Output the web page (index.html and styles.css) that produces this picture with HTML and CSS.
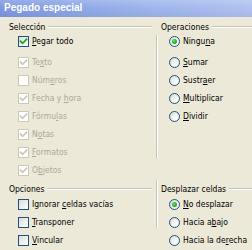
FILE: index.html
```html
<!DOCTYPE html>
<html lang="es">
<head>
<meta charset="utf-8">
<title>Pegado especial</title>
<link rel="stylesheet" href="styles.css">
</head>
<body>
<div class="window">
  <div class="titlebar">Pegado especial</div>

  <div class="section">
    <div class="col left">
      <div class="fl"><span class="fl-text">Selección</span><i class="fl-line"></i></div>
      <ul class="items">
        <li class="item first"><span class="cb on"><svg viewBox="0 0 9 9"><polyline points="1.5,4.2 3.6,6.3 7.6,2.2"/></svg></span><span class="lbl"><u>P</u>egar todo</span></li>
        <li class="item dis"><span class="cb on"><svg viewBox="0 0 9 9"><polyline points="1.5,4.2 3.6,6.3 7.6,2.2"/></svg></span><span class="lbl">Te<u>x</u>to</span></li>
        <li class="item dis"><span class="cb"></span><span class="lbl">Núm<u>e</u>ros</span></li>
        <li class="item dis"><span class="cb on"><svg viewBox="0 0 9 9"><polyline points="1.5,4.2 3.6,6.3 7.6,2.2"/></svg></span><span class="lbl">Fecha y <u>h</u>ora</span></li>
        <li class="item dis"><span class="cb on"><svg viewBox="0 0 9 9"><polyline points="1.5,4.2 3.6,6.3 7.6,2.2"/></svg></span><span class="lbl">Fórmu<u>l</u>as</span></li>
        <li class="item dis"><span class="cb on"><svg viewBox="0 0 9 9"><polyline points="1.5,4.2 3.6,6.3 7.6,2.2"/></svg></span><span class="lbl">N<u>o</u>tas</span></li>
        <li class="item dis"><span class="cb on"><svg viewBox="0 0 9 9"><polyline points="1.5,4.2 3.6,6.3 7.6,2.2"/></svg></span><span class="lbl"><u>F</u>ormatos</span></li>
        <li class="item dis"><span class="cb on"><svg viewBox="0 0 9 9"><polyline points="1.5,4.2 3.6,6.3 7.6,2.2"/></svg></span><span class="lbl">O<u>b</u>jetos</span></li>
      </ul>
    </div>
    <div class="vsep top"></div>
    <div class="col right">
      <div class="fl"><span class="fl-text">Operaciones</span><i class="fl-line"></i></div>
      <ul class="items">
        <li class="item first"><span class="rb on"></span><span class="lbl">Ningu<u>n</u>a</span></li>
        <li class="item"><span class="rb"></span><span class="lbl"><u>S</u>umar</span></li>
        <li class="item"><span class="rb"></span><span class="lbl">Sustr<u>a</u>er</span></li>
        <li class="item"><span class="rb"></span><span class="lbl"><u>M</u>ultiplicar</span></li>
        <li class="item"><span class="rb"></span><span class="lbl"><u>D</u>ividir</span></li>
      </ul>
    </div>
  </div>

  <div class="section bottom">
    <div class="col left">
      <div class="fl"><span class="fl-text">Opciones</span><i class="fl-line"></i></div>
      <ul class="items">
        <li class="item"><span class="cb"></span><span class="lbl">Ignorar <u>c</u>eldas vacías</span></li>
        <li class="item"><span class="cb"></span><span class="lbl"><u>T</u>ransponer</span></li>
        <li class="item"><span class="cb"></span><span class="lbl"><u>V</u>incular</span></li>
      </ul>
    </div>
    <div class="vsep low"></div>
    <div class="col right">
      <div class="fl"><span class="fl-text">Desplazar celdas</span><i class="fl-line"></i></div>
      <ul class="items">
        <li class="item"><span class="rb on"></span><span class="lbl"><u>N</u>o desplazar</span></li>
        <li class="item"><span class="rb"></span><span class="lbl">Hacia a<u>b</u>ajo</span></li>
        <li class="item"><span class="rb"></span><span class="lbl">Hacia la de<u>r</u>echa</span></li>
      </ul>
    </div>
  </div>
</div>
</body>
</html>
```

FILE: styles.css
```css
* { box-sizing: border-box; }
html, body { margin: 0; padding: 0; }
body {
  background: #ECE9D8;
  font-family: "DejaVu Sans Condensed", "DejaVu Sans", sans-serif;
  font-size: 8.5px;
  color: #000;
}
.window {
  width: 252px;
  height: 250px;
  overflow: hidden;
  background: #ECE9D8;
}
.titlebar {
  height: 17px;
  line-height: 16px;
  padding-left: 4px;
  color: #fff;
  font-family: "Liberation Sans", sans-serif;
  font-weight: bold;
  font-size: 10px;
  background:
    linear-gradient(to bottom, rgba(255,255,255,0.18), rgba(255,255,255,0) 45%, rgba(0,0,40,0.05)),
    linear-gradient(to right, #7E99E0, #9EB5EC 60%, #AFC2F0);
}
.section {
  display: grid;
  grid-template-columns: 152px 8px 1fr;
  height: 162px;
}
.section.bottom { height: 71px; }
.col { display: flex; flex-direction: column; }
.fl {
  display: flex;
  align-items: center;
  height: 12px;
  margin-top: 4px;
}
.left .fl { padding-left: 9px; }
.right .fl { padding-left: 1px; }
.fl-text { white-space: nowrap; }
.fl-line {
  flex: 1;
  height: 2px;
  margin-left: 3px;
  border-top: 1px solid #C6C3B4;
  border-bottom: 1px solid #FFFFFF;
}
.items {
  list-style: none;
  margin: 0;
  padding: 0;
}
.left .items { padding-left: 18px; }
.right .items { padding-left: 9px; }
.item {
  display: flex;
  align-items: center;
  height: 18px;
  white-space: nowrap;
}
.item.first { height: 16px; margin-bottom: 4px; }
.lbl { margin-left: 3px; }
.right .lbl { margin-left: 3px; }
.item.dis .lbl { color: #ACA899; }
u { text-decoration: underline; text-underline-offset: 1px; }

.cb {
  width: 11px;
  height: 11px;
  flex: none;
  border: 1px solid #1C5180;
  background: linear-gradient(135deg, #DCDCD7 0%, #F4F4F1 70%, #FFFFFF 100%);
  display: flex;
  align-items: center;
  justify-content: center;
}
.cb svg { width: 9px; height: 9px; display: block; }
.cb polyline {
  fill: none;
  stroke: #21A121;
  stroke-width: 1.7;
  stroke-linecap: square;
}
.item.dis .cb {
  border-color: #CAC8BB;
  background: #FFFFFF;
}
.item.dis .cb polyline { stroke: #CAC8BB; }

.rb {
  width: 11px;
  height: 11px;
  flex: none;
  border-radius: 50%;
  border: 1px solid #1C5180;
  background: radial-gradient(circle at 70% 70%, #FFFFFF 0%, #F2F2EE 40%, #D6D6CF 100%);
  display: flex;
  align-items: center;
  justify-content: center;
}
.rb.on::after {
  content: "";
  width: 5px;
  height: 5px;
  border-radius: 50%;
  background: radial-gradient(circle at 40% 40%, #7FE07F 0%, #2DB42D 45%, #1A8C1A 100%);
}

.vsep {
  width: 2px;
  margin-left: 4px;
  border-left: 1px solid #C6C3B4;
  border-right: 1px solid #FFFFFF;
}
.vsep.top { margin-top: 18px; height: 123px; }
.vsep.low { margin-top: 1px; height: 48px; }
```
